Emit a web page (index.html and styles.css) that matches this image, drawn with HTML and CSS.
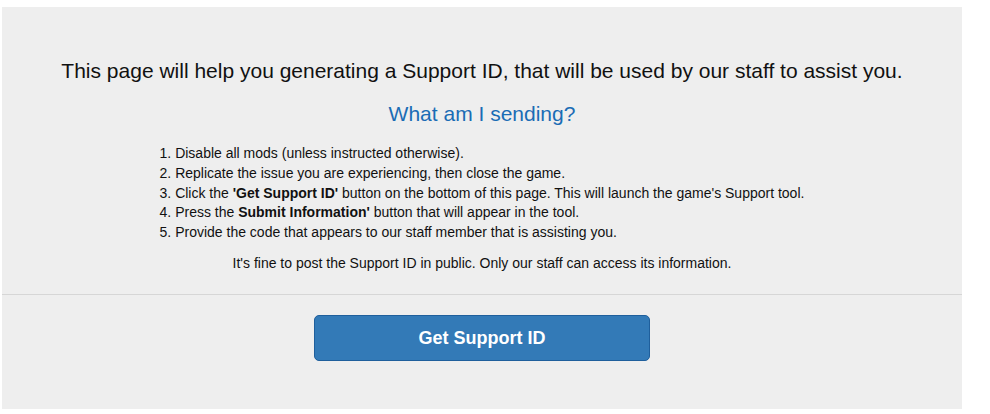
FILE: index.html
```html
<!DOCTYPE html>
<html>
<head>
<meta charset="utf-8">
<link rel="stylesheet" href="styles.css">
</head>
<body>
<div class="panel">
  <div class="info">
    <h1 class="title">This page will help you generating a Support ID, that will be used by our staff to assist you.</h1>
    <h2 class="subtitle">What am I sending?</h2>
    <div class="steps-wrap">
      <ol class="steps">
        <li>Disable all mods (unless instructed otherwise).</li>
        <li>Replicate the issue you are experiencing, then close the game.</li>
        <li>Click the <b>'Get Support ID'</b> button on the bottom of this page. This will launch the game's Support tool.</li>
        <li>Press the <b>Submit Information'</b> button that will appear in the tool.</li>
        <li>Provide the code that appears to our staff member that is assisting you.</li>
      </ol>
    </div>
    <p class="note">It's fine to post the Support ID in public. Only our staff can access its information.</p>
  </div>
  <div class="actions">
    <button class="btn">Get Support ID</button>
  </div>
</div>
</body>
</html>
```

FILE: styles.css
```css
html, body {
  margin: 0;
  padding: 0;
  background: #ffffff;
}
body {
  padding: 7px 0 0 2px;
  font-family: "Liberation Sans", Arial, sans-serif;
  color: #222222;
}
.panel {
  width: 960px;
  height: 402px;
  background: #eeeeee;
  display: flex;
  flex-direction: column;
}
.info {
  text-align: center;
  padding-top: 52px;
  padding-bottom: 20px;
  border-bottom: 1px solid #d6d6d6;
  height: 288px;
  box-sizing: border-box;
}
.title {
  margin: 0;
  font-size: 21px;
  font-weight: normal;
  line-height: 24px;
  color: #111111;
}
.subtitle {
  margin: 19px 0 0;
  font-size: 21px;
  font-weight: normal;
  line-height: 24px;
  color: #1a6cb5;
}
.steps-wrap {
  margin-top: 18px;
}
.steps {
  display: inline-block;
  text-align: left;
  margin: 0;
  padding: 0;
  list-style-position: inside;
  font-size: 14px;
  line-height: 19.8px;
  color: #111111;
}
.note {
  margin: 10px 0 0;
  font-size: 14px;
  line-height: 20px;
  color: #111111;
}
.actions {
  display: flex;
  justify-content: center;
  padding-top: 20px;
}
.btn {
  width: 336px;
  height: 46px;
  background: #337ab7;
  border: 1px solid #1f5f9c;
  border-radius: 5px;
  color: #ffffff;
  font-family: "Liberation Sans", Arial, sans-serif;
  font-weight: bold;
  font-size: 18px;
}
```
